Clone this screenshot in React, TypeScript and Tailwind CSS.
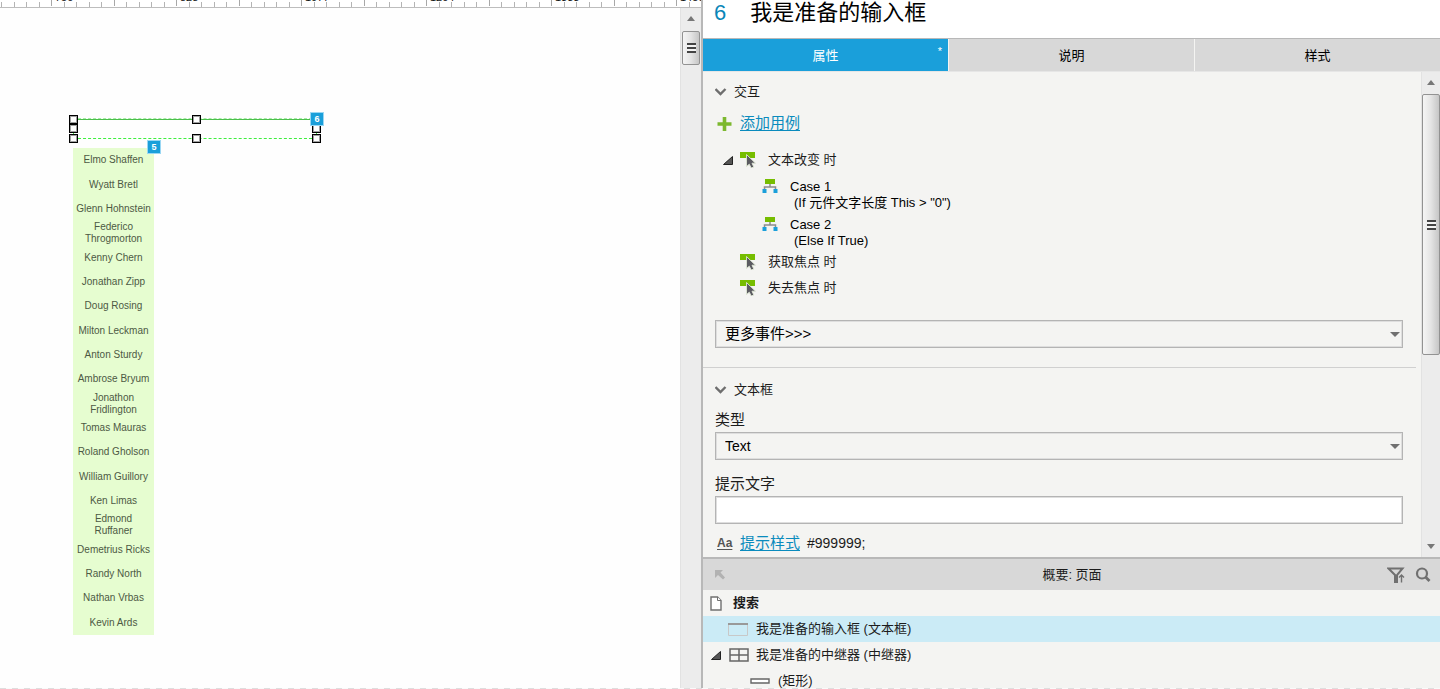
import { ReactNode } from 'react';
import { clsx } from 'clsx';

const names = [
  'Elmo Shaffen',
  'Wyatt Bretl',
  'Glenn Hohnstein',
  'Federico\nThrogmorton',
  'Kenny Chern',
  'Jonathan Zipp',
  'Doug Rosing',
  'Milton Leckman',
  'Anton Sturdy',
  'Ambrose Bryum',
  'Jonathon\nFridlington',
  'Tomas Mauras',
  'Roland Gholson',
  'William Guillory',
  'Ken Limas',
  'Edmond\nRuffaner',
  'Demetrius Ricks',
  'Randy North',
  'Nathan Vrbas',
  'Kevin Ards',
];

const rulerLabels = ['750', '828', '1077', '1204', '1333', '1450'];
const rulerTicks = Array.from({ length: 160 }, (_, i) => ({
  x: Math.floor(1.5 + i * 12.5),
  major: i % 5 === 4,
}));

const handles = [
  'left-[69px] top-[107px]',
  'left-[192px] top-[107px]',
  'left-[69px] top-[116px]',
  'left-[312px] top-[116px]',
  'left-[69px] top-[126px]',
  'left-[192px] top-[126px]',
  'left-[312px] top-[126px]',
];

const Ruler = () => (
  <svg className="block h-2 w-full shrink-0 bg-white" aria-hidden="true">
    {rulerTicks.map(({ x, major }) => (
      <rect key={x} x={x} y={major ? 0 : 2} width="1" height="6" fill={major ? '#a8a8a8' : '#b4b4b4'} />
    ))}
    <path d="M0 7.5H2000" stroke="#bdbdbd" />
    {rulerLabels.map((label, i) => (
      <text key={label} x={55 + i * 125} y="1" fontSize="11" fill="#111">
        {label}
      </text>
    ))}
  </svg>
);

const Arrow = ({ down = false }: { down?: boolean }) => (
  <svg viewBox="0 0 8 5" className="h-[5px] w-2" fill="#777" aria-hidden="true">
    <path d={down ? 'M0 0H8L4 5Z' : 'M0 5H8L4 0Z'} />
  </svg>
);

const Thumb = ({ className }: { className: string }) => (
  <div
    className={clsx(
      'flex w-[18px] shrink-0 items-center justify-center rounded-xs border border-[#929292] bg-linear-to-r from-[#f5f5f5] via-[#e4e4e4] to-[#c6c6c6]',
      className,
    )}
  >
    <svg viewBox="0 0 9 10" className="h-[10px] w-[9px]" aria-hidden="true">
      <path d="M0 0H9V10H0Z" fill="#f4f4f4" />
      <path d="M0 1H9M0 5H9M0 9H9" stroke="#444" strokeWidth="1.8" />
    </svg>
  </div>
);

const Badge = ({ children, className }: { children: ReactNode; className: string }) => (
  <span
    className={clsx(
      'absolute flex size-[14px] items-center justify-center border border-[#9ad7f3] bg-[#1a9fda] text-[9px] leading-none font-bold text-white',
      className,
    )}
  >
    {children}
  </span>
);

const Canvas = () => (
  <section className="flex min-w-0 flex-1 flex-col overflow-hidden">
    <Ruler />
    <div className="flex min-h-0 flex-1">
      <div className="relative min-w-0 flex-1 overflow-hidden bg-[#fefefe]">
        {/* selected text box */}
        <div className="absolute top-[110px] left-[73px] h-[21px] w-[244px] border border-dashed border-[#3df03d] border-t-[#a5eda5]">
          <div className="h-px bg-[#4cbf4c]" />
        </div>
        {handles.map((pos) => (
          <span
            key={pos}
            className={clsx('absolute size-[9px] border border-black bg-white shadow-[inset_0_0_0_1px_#a0a0a0]', pos)}
          />
        ))}
        <Badge className="top-[104px] left-[310px]">6</Badge>

        {/* repeater */}
        <ul className="absolute top-[140px] left-[73px] flex h-[487px] w-[81px] flex-col bg-[#e6fdd0] text-center text-[10px] leading-3 text-[#4d5944]">
          {names.map((name) => (
            <li key={name} className="flex min-h-0 flex-1 items-center justify-center whitespace-pre-line">
              {name}
            </li>
          ))}
        </ul>
        <Badge className="top-[132px] left-[147px]">5</Badge>
      </div>
      <div className="flex w-[21px] flex-col items-center border-l border-[#e2e2e2] bg-[#ececec] pt-2">
        <Arrow />
        <Thumb className="mt-[10px] h-[34px]" />
      </div>
    </div>
  </section>
);

const EventIcon = () => (
  <svg viewBox="0 0 16 16" className="size-4 shrink-0" aria-hidden="true">
    <path d="M0 0H15V6H0Z" fill="#76bd00" />
    <path d="M6.5 2.5V14.5L9.3 12.2L11.2 16L13.8 15L12 11.200H15.500Z" fill="#5b5b61" stroke="#dfe6d5" strokeWidth="0.9" />
  </svg>
);

const CaseIcon = () => (
  <svg viewBox="0 0 16 14" className="h-[14px] w-4 shrink-0" aria-hidden="true">
    <path d="M8 5V8M2.5 11V8H13.5V11" fill="none" stroke="#8c8c8c" strokeWidth="1.5" />
    <path d="M3 0H13V5H3Z" fill="#76bd00" />
    <path d="M0.500 10H4.500V14H0.500ZM11.500 10H15.500V14H11.500Z" fill="#1a9fda" />
  </svg>
);

const Expander = () => (
  <svg viewBox="0 0 10 9" className="h-[9px] w-[10px] shrink-0" aria-hidden="true">
    <path d="M9.500 0.500V8.500H0.500Z" fill="#555" stroke="#222" />
  </svg>
);

const SectionTitle = ({ children }: { children: ReactNode }) => (
  <h2 className="flex h-5 items-center gap-[7px] text-[13px]">
    <svg viewBox="0 0 12 8" className="h-2 w-3" aria-hidden="true">
      <path d="M0.500 1L5.500 6L10.500 1" fill="none" stroke="#6e6e6e" strokeWidth="2.400" />
    </svg>
    {children}
  </h2>
);

const EventRow = ({ children, open = false }: { children: ReactNode; open?: boolean }) => (
  <div className="flex h-[26px] items-center pl-2 text-[13px]">
    <span className="w-[17px]">{open && <Expander />}</span>
    <EventIcon />
    <span className="ml-3">{children}</span>
  </div>
);

const CaseRow = ({ title, rule }: { title: string; rule: string }) => (
  <div className="flex h-[38px] gap-3 pt-1.5 pl-[47px] text-[13px] leading-4 text-black">
    <CaseIcon />
    <div>
      <p>{title}</p>
      <p className="pl-1">{rule}</p>
    </div>
  </div>
);

const SelectBox = ({ id, label, value, className }: { id: string; label: string; value: string; className: string }) => (
  <div className="relative mr-[18px]">
    <select
      id={id}
      aria-label={label}
      className={clsx(
        'block h-7 w-full appearance-none border border-[#b4b4b4] bg-[#f4f4f2] pl-[9px] text-black shadow-[inset_0_0_0_1px_#dedede]',
        className,
      )}
    >
      <option>{value}</option>
    </select>
    <span className="pointer-events-none absolute inset-y-0 right-[3px] flex items-center">
      <svg viewBox="0 0 10 5" className="h-[5px] w-[10px]" fill="#707070" aria-hidden="true">
        <path d="M0 0H10L5 5Z" />
      </svg>
    </span>
  </div>
);

const Properties = () => (
  <div className="flex min-h-0 flex-1">
    <div className="min-w-0 flex-1 overflow-hidden pt-[10px] pl-3">
      <SectionTitle>交互</SectionTitle>
      <div className="mt-[9px] flex h-6 items-center gap-2 text-[15px]">
        <svg viewBox="0 0 14 14" className="mt-0.5 ml-0.5 h-[14px] w-[15px]" aria-hidden="true">
          <path d="M7 0V14M0 7H14" stroke="#7cb82f" strokeWidth="3.6" />
        </svg>
        <a href="#" className="text-[#0a8bbd] underline underline-offset-2">
          添加用例
        </a>
      </div>
      <div className="mt-3">
        <EventRow open>文本改变 时</EventRow>
        <CaseRow title="Case 1" rule={'(If 元件文字长度 This > "0")'} />
        <CaseRow title="Case 2" rule="(Else If True)" />
        <EventRow>获取焦点 时</EventRow>
        <EventRow>失去焦点 时</EventRow>
      </div>
      <div className="mt-[19px]">
        <SelectBox id="more-events" label="更多事件" value="更多事件>>>" className="text-[15px]" />
      </div>
      <hr className="mt-[19px] mr-[5px] -ml-3 border-[#d0d0d0]" />
      <div className="mt-3">
        <SectionTitle>文本框</SectionTitle>
      </div>
      <label htmlFor="type" className="mt-2 block h-6 text-[15px] leading-6">
        类型
      </label>
      <SelectBox id="type" label="类型" value="Text" className="text-[14px]" />
      <label htmlFor="hint" className="mt-3 block h-6 text-[15px] leading-6">
        提示文字
      </label>
      <div className="mr-[18px]">
        <input
          id="hint"
          type="text"
          className="block h-7 w-full border border-[#b4b4b4] bg-white px-2 text-[14px] shadow-[inset_0_0_0_1px_#dedede]"
        />
      </div>
      <div className="mt-[7px] flex h-6 items-center text-[15px]">
        <span className="ml-0.5 w-[23px] text-[12px] leading-3 font-bold text-[#555] underline decoration-[#555] underline-offset-2">
          Aa
        </span>
        <a href="#" className="text-[#0a8bbd] underline underline-offset-2">
          提示样式
        </a>
        <span className="ml-[7px] text-[14px]">#999999;</span>
      </div>
    </div>
    <div className="flex w-[19px] flex-col items-center border-l border-[#e2e2e2] bg-[#ececec] py-2">
      <Arrow />
      <Thumb className="mt-[9px] h-[261px]" />
      <span className="mt-auto">
        <Arrow down />
      </span>
    </div>
  </div>
);

const Outline = () => (
  <section className="h-[132px] shrink-0 overflow-hidden border-t-2 border-[#b8b8b8] text-[13px]">
    <header className="flex h-[31px] items-center bg-[#d8d8d8] pr-[9px] pl-3">
      <svg viewBox="0 0 10 10" className="mr-8 size-[10px]" aria-hidden="true">
        <path d="M0 0H8L5.500 2.500L10 7.500L8 9.500L3 5L0 8Z" fill="#b2b2b2" />
      </svg>
      <h2 className="flex-1 text-center">概要: 页面</h2>
      <button type="button" aria-label="过滤">
        <svg viewBox="0 0 18 16" className="h-4 w-[18px]" fill="none" stroke="#707070" aria-hidden="true">
          <path d="M1.500 1.500H15.500L10 8V15H8V8Z" strokeWidth="2" />
          <path d="M14.500 15.500V8M12 10.500L14.500 8L17 10.500" strokeWidth="1.400" />
        </svg>
      </button>
      <button type="button" aria-label="查找" className="ml-[10px]">
        <svg viewBox="0 0 16 16" className="size-4" fill="none" stroke="#707070" aria-hidden="true">
          <circle cx="7" cy="6.500" r="5" strokeWidth="2.200" />
          <path d="M10.500 10L14.500 14" strokeWidth="2.800" />
        </svg>
      </button>
    </header>
    <ul>
      <li className="flex h-[26px] items-center pl-[7px] font-bold">
        <svg viewBox="0 0 12 15" className="mr-[11px] h-[15px] w-3" fill="#fff" stroke="#707070" aria-hidden="true">
          <path d="M1 1H7.500L11 4.500V14H1Z" strokeWidth="1.400" />
          <path d="M7.500 1V4.500H11" />
        </svg>
        搜索
      </li>
      <li className="flex h-[26px] items-center bg-[#cbebf6] pl-[25px]">
        <svg viewBox="0 0 20 13" className="mr-2 h-[13px] w-5" aria-hidden="true">
          <path d="M0.500 1V12.500H19.500V1" fill="none" stroke="#c8c8c8" />
          <path d="M0 1H20" stroke="#999" strokeWidth="2" />
        </svg>
        我是准备的输入框 (文本框)
      </li>
      <li className="flex h-[26px] items-center pl-2">
        <Expander />
        <svg
          viewBox="0 0 20 14"
          className="mr-[7px] ml-2 h-[14px] w-5"
          fill="none"
          stroke="#666"
          strokeWidth="1.500"
          aria-hidden="true"
        >
          <path d="M1 1H19V13H1ZM10 1V13M1 7H19" />
        </svg>
        我是准备的中继器 (中继器)
      </li>
      <li className="flex h-[26px] items-center pl-[47px]">
        <svg viewBox="0 0 20 6" className="mr-2 h-[6px] w-5" aria-hidden="true">
          <path d="M1 1H19V5H1Z" fill="#fff" stroke="#666" strokeWidth="1.400" />
        </svg>
        (矩形)
      </li>
    </ul>
  </section>
);

const tabs = ['属性', '说明', '样式'];

const Inspector = () => (
  <aside className="flex w-[739px] shrink-0 flex-col border-l-2 border-[#b8b8b8] bg-[#f4f4f2] text-[#1c1c1c]">
    <header className="flex h-[39px] shrink-0 items-start gap-6 border-b border-[#b8b8b8] bg-white pl-[11px] text-[22px] leading-[26px] text-black">
      <span className="text-[#0a86b8]">6</span>
      <h1>我是准备的输入框</h1>
    </header>
    <div role="tablist" className="grid h-[33px] shrink-0 grid-cols-3 gap-px border-b border-[#e6e6e6] text-[13px]">
      {tabs.map((tab, i) => (
        <button
          key={tab}
          type="button"
          role="tab"
          aria-selected={i === 0}
          className={clsx('relative pt-px', i === 0 ? 'bg-[#1a9fda] text-white' : 'bg-[#d8d8d8] text-black')}
        >
          {tab}
          {i === 0 && <span className="absolute top-1 right-[6px] text-[11px]">*</span>}
        </button>
      ))}
    </div>
    <Properties />
    <Outline />
  </aside>
);

export default function App() {
  return (
    <div className="relative flex h-screen min-w-[1100px] overflow-hidden bg-white font-['Liberation_Sans','Noto_Sans_CJK_SC',sans-serif]">
      <Canvas />
      <Inspector />
      {/* page guide */}
      <div className="absolute inset-x-0 bottom-0 h-px bg-[repeating-linear-gradient(90deg,#dedede_0_6px,#fafafa_6px_12px)]" />
    </div>
  );
}
